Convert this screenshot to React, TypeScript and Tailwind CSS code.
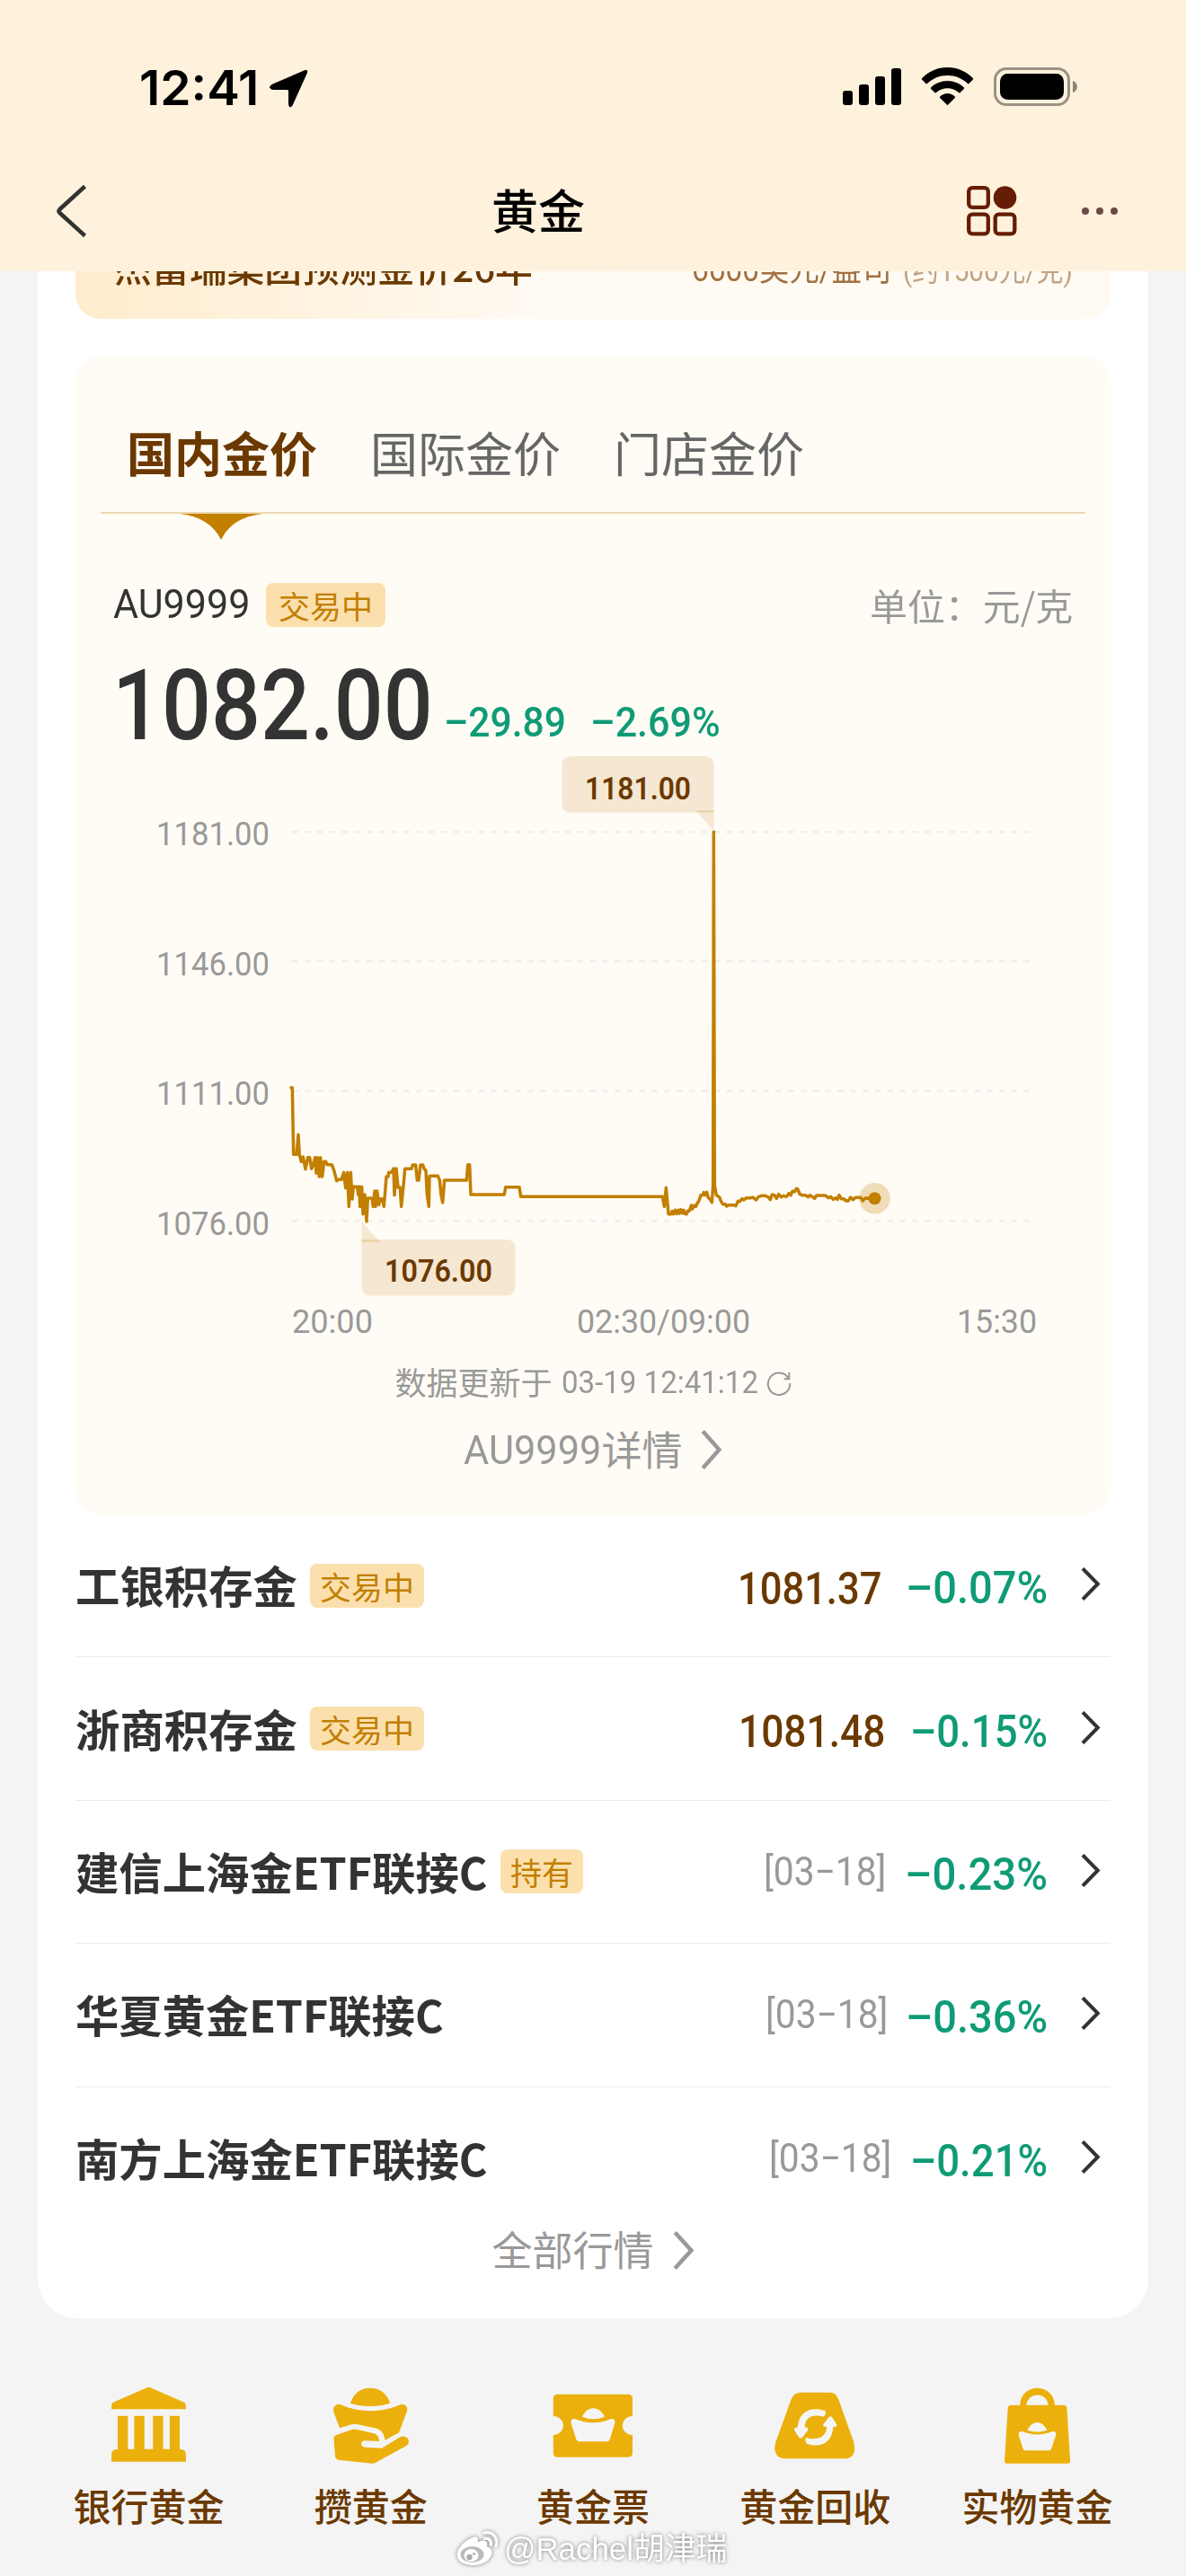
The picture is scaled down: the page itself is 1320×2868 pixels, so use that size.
import { useLayoutEffect, useRef, useState, type ReactNode } from "react";

/* Text squeezed or stretched horizontally to an exact width. */
function Fit({ w, className = "", children }: { w: number; className?: string; children: ReactNode }) {
  const ref = useRef<HTMLSpanElement>(null);
  const [scale, setScale] = useState(1);
  useLayoutEffect(() => {
    if (ref.current) setScale(w / ref.current.offsetWidth);
  }, [w]);
  return (
    <span className={`inline-block shrink-0 whitespace-nowrap ${className}`} style={{ width: w }}>
      <span ref={ref} className="inline-block origin-left" style={{ transform: `scaleX(${scale})` }}>
        {children}
      </span>
    </span>
  );
}

function Chevron({ w, h, sw, className }: { w: number; h: number; sw: number; className: string }) {
  return (
    <svg width={w} height={h} viewBox={`0 0 ${w} ${h}`} fill="none" stroke="currentColor" strokeWidth={sw} className={className}>
      <path d={`M${sw / 2} ${sw / 3} L${w - sw * 0.8} ${h / 2} L${sw / 2} ${h - sw / 3}`} />
    </svg>
  );
}

function StatusBar() {
  return (
    <div className="flex h-[168px] items-start pl-[155px] pr-[120px] pt-[75px]">
      <Fit w={133} className="-mt-[4px] font-['Inter'] text-[53px] font-semibold leading-[54px] text-black">12:41</Fit>
      <svg width="44" height="44" viewBox="0 0 44 44" className="ml-[11px] mt-[2px]">
        <path d="M40.500 1.500Q43.500 .5 42.500 4L26 40.500Q23.500 44 22.500 39.500V24.500Q22.500 22.500 20.500 22.500H4.500Q-1 21 3.500 17.500Z" fill="#000" stroke="#000" strokeWidth="1" />
      </svg>
      <div className="flex-1" />
      <svg width="262" height="44" viewBox="937 75 262 44">
        <g>
          <rect x="937" y="101" width="11" height="16" rx="3" />
          <rect x="955" y="94" width="11" height="23" rx="3" />
          <rect x="973" y="85" width="11" height="32" rx="3" />
          <rect x="991" y="76" width="11" height="41" rx="3" />
        </g>
        <path d="M1053.500 75C1042.500 75 1032.500 79.500 1025 87.300Q1024.600 88 1025 88.500L1029.500 93Q1030.200 93.500 1031 92.900C1037 87.200 1045 83.900 1053.500 83.900S1070 87.200 1076 92.900Q1076.800 93.500 1077.500 93L1082 88.500Q1082.400 88 1082 87.300C1074.500 79.500 1064.500 75 1053.500 75Z" />
        <path d="M1053.500 90C1046.500 90 1040 92.800 1035 97.500Q1034.600 98.200 1035 98.700L1039.500 103.200Q1040.200 103.700 1041 103.100C1044.500 100 1048.800 98.200 1053.500 98.200S1062.500 100 1066 103.100Q1066.800 103.700 1067.500 103.200L1072 98.700Q1072.400 98.200 1072 97.500C1067 92.800 1060.500 90 1053.500 90Z" />
        <path d="M1053.500 104C1050.500 104 1047.500 105.300 1045.200 107.500Q1044.600 108.200 1045.200 108.900L1052.700 116.500Q1053.500 117.300 1054.300 116.500L1061.800 108.900Q1062.400 108.200 1061.800 107.500C1059.500 105.300 1056.500 104 1053.500 104Z" />
        <rect x="1106.500" y="76.500" width="82" height="40" rx="12.500" fill="none" stroke="#9a9284" strokeWidth="3" />
        <rect x="1112" y="82" width="71" height="29" rx="8.500" />
        <path d="M1193 90C1199.500 92 1199.500 101 1193 103Z" fill="#8a8376" />
      </svg>
    </div>
  );
}

function NavBar() {
  return (
    <div className="flex h-[134px] items-center pl-[62px] pr-[76px]">
      <svg width="36" height="60" viewBox="0 0 36 60" fill="none" stroke="#333" strokeWidth="4.500">
        <path d="M32.500 2.500L4.500 28Q2.500 30 4.500 32L32.500 57.500" />
      </svg>
      <span className="-mt-[5px] ml-[449px] text-[52px] font-medium leading-[52px] text-black">黄金</span>
      <div className="flex-1" />
      <svg width="56" height="56" viewBox="0 0 56 56" fill="none" stroke="#661d05" strokeWidth="4.300">
        <rect x="2.200" y="2.200" width="21.600" height="21.600" rx="4" />
        <rect x="2.200" y="31.700" width="21.600" height="21.600" rx="4" />
        <rect x="31.700" y="31.700" width="21.600" height="21.600" rx="4" />
        <circle cx="42.500" cy="13" r="12.800" fill="#661d05" stroke="none" />
      </svg>
      <div className="ml-[72px] flex gap-2">
        <i className="size-2 rounded-full bg-[#6b4a42]" />
        <i className="size-2 rounded-full bg-[#6b4a42]" />
        <i className="size-2 rounded-full bg-[#6b4a42]" />
      </div>
    </div>
  );
}

function Badge({ w, children }: { w: number; children: ReactNode }) {
  return (
    <span
      className="flex h-[49px] shrink-0 items-center justify-center rounded-[8px] bg-[#fbe0ae] text-[35px] leading-[49px] text-[#c27f00]"
      style={{ width: w }}
    >
      {children}
    </span>
  );
}

const NIGHT =
  "M24,33 L28,33 L32,256 L42,256 L48,190 L52,258 L58,280 L64,264 L72,305 L80,266 L86,266 L92,304 L98,290 L104,266 L108,318 L112,266 L118,330 L122,266 L128,330 L134,280 L140,280 L145,290 L160,290 L168,312 L176,344 L180,340 L192,340 L200,316 L206,368 L212,316 L217,430 L223,316 L228,405 L232,364 L245,364 L248,390 L252,364 L254,430 L260,364 L264,455 L270,390 L276,480 L280,402 L294,402 L298,430 L303,378 L306,430 L311,378 L317,424 L322,404 L328,404 L334,430 L342,330 L348,330 L350,316 L360,316 L366,303 L369,392 L375,303 L381,366 L388,366 L392,430 L400,350 L404,304 L426,304 L430,291 L440,291 L445,342 L450,342 L456,291 L464,291 L468,303 L474,310 L478,390 L484,430 L486,328 L514,328 L520,342 L525,392 L530,417 L536,342 L610,342 L614,290 L620,290 L624,390 L736,390 L740,365 L786,365 L791,397";
const DAY =
  "M-451,97 L22,97 L28,130 L34,67 L38,110 L42,155 L50,155 L54,146 L58,155 L64,142 L69,154 L74,142 L78,153 L83,140 L88,152 L93,142 L97,154 L102,155 L107,144 L112,144 L118,126 L122,138 L128,126 L133,130 L138,120 L144,110 L150,92 L156,92 L160,83 L166,92 L170,82 L175,100 L182,107 L187,116 L191,60 L193,-1122 L196,60 L202,92 L212,98 L218,114 L224,122 L232,122 L236,129 L242,125 L262,125 L267,128 L274,112 L280,113 L288,104 L294,108 L302,101 L318,101 L324,99 L334,108 L342,98 L352,94 L366,94 L376,99 L382,107 L388,90 L396,92 L403,103 L410,89 L418,98 L426,94 L436,97 L444,86 L450,92 L456,79 L464,80 L469,70 L474,72 L480,88 L488,92 L500,92 L508,98 L514,92 L524,98 L530,103 L536,93 L566,93 L576,101 L584,97 L592,106 L600,101 L606,106 L612,92 L619,104 L628,104 L634,111 L642,111 L650,99 L658,107 L666,100 L684,100 L691,111 L698,102 L730,103";

function AxisText({ x, y, w, children }: { x: number; y: number; w: number; children: string }) {
  return (
    <text x={x} y={y} textLength={w} lengthAdjust="spacingAndGlyphs" fill="#999" fontSize="36.500">
      {children}
    </text>
  );
}

function PriceChart() {
  return (
    <svg width="1152" height="655" viewBox="84 838 1152 655" className="block font-['Roboto']">
      <g stroke="#f0eeee" strokeWidth="2.500" strokeDasharray="7 6.800">
        <path d="M325 926.300H1148M325 1070.300H1148M325 1214.700H1148M325 1359.300H1148" />
      </g>
      <AxisText x={174} y={940.5} w={126}>1181.00</AxisText>
      <AxisText x={174} y={1086} w={126}>1146.00</AxisText>
      <AxisText x={174} y={1230} w={126}>1111.00</AxisText>
      <AxisText x={174} y={1374.5} w={126}>1076.00</AxisText>
      <AxisText x={325} y={1483.5} w={90}>20:00</AxisText>
      <AxisText x={642} y={1483.5} w={193}>02:30/09:00</AxisText>
      <AxisText x={1065} y={1483.5} w={89}>15:30</AxisText>
      <g fill="none" stroke="#c27f00" strokeWidth="10.500" strokeLinejoin="round" strokeLinecap="round">
        <path transform="translate(316 1200) scale(.33333)" d={NIGHT} />
        <path transform="translate(730 1300) scale(.33333)" d={DAY} />
      </g>
      <circle cx="973.500" cy="1334.300" r="17.300" fill="#c27f00" fillOpacity=".25" />
      <circle cx="973.500" cy="1334.300" r="7" fill="#c27f00" />
      <path d="M636 842H784Q794.500 842 794.500 852V904.500H636Q625.500 904.500 625.500 894.500V852Q625.500 842 636 842Z" fill="#f5e7d2" />
      <path d="M774 902H794.500V925Z" fill="#f5e7d2" />
      <path d="M774 902H794.500V904.500H775.500Z" fill="#ecd5a9" />
      <path d="M402.500 1380H563.500Q573.500 1380 573.500 1390V1432.500Q573.500 1442.500 563.500 1442.500H412.500Q402.500 1442.500 402.500 1432.500Z" fill="#f5e7d2" />
      <path d="M402.500 1360L423 1383H402.500Z" fill="#f5e7d2" />
      <path d="M402.500 1380H420.500L423 1383H402.500Z" fill="#ecd5a9" />
      <g fill="#6b3900" fontSize="35" fontWeight="600">
        <text x="651" y="889.500" textLength="118" lengthAdjust="spacingAndGlyphs">1181.00</text>
        <text x="428" y="1427" textLength="120" lengthAdjust="spacingAndGlyphs">1076.00</text>
      </g>
    </svg>
  );
}

function PriceCard() {
  return (
    <section className="mt-[42px] h-[1289px] rounded-[28px] bg-[#fffcf5]">
      <div className="mx-[28px] flex h-[175px] gap-[59px] border-b-2 border-[#ecd9b0] pl-[29px] pt-[80px] text-[53px] leading-[53px] text-[#666]">
        <span className="font-bold text-[#6b3900]">国内金价</span>
        <span>国际金价</span>
        <span>门店金价</span>
      </div>
      <svg width="92" height="29" viewBox="0 0 92 29" className="ml-[116px] block">
        <path d="M0 0H92Q58 4 46 29Q34 4 0 0Z" fill="#c27f00" />
      </svg>
      <div className="flex h-[101px] items-center pl-[42px] pr-[42px] pt-[44px]">
        <Fit w={152} className="-mt-[3px] font-['Roboto'] text-[45px] leading-[49px] text-[#333]">AU9999</Fit>
        <div className="ml-[18px]"><Badge w={133}>交易中</Badge></div>
        <div className="flex-1" />
        <Fit w={226} className="text-[41px] leading-[49px] text-[#999]">单位：元/克</Fit>
      </div>
      <div className="flex h-[136px] items-end pl-[41px] font-['Roboto'] font-medium">
        <Fit w={357} className="-mb-[12px] text-[110px] leading-[128px] text-[#333]">1082.00</Fit>
        <Fit w={136} className="mb-[7px] ml-[12px] text-[46px] leading-[54px] text-[#0f9b76]">–29.89</Fit>
        <Fit w={145} className="mb-[7px] ml-[27px] text-[46px] leading-[54px] text-[#0f9b76]">–2.69%</Fit>
      </div>
      <PriceChart />
      <div className="flex h-[93px] items-center justify-center text-[#999]">
        <span className="-mt-[4px] text-[35px] leading-[40px]">数据更新于</span>
        <Fit w={219} className="ml-[10px] font-['Roboto'] text-[35px] leading-[40px]">03-19 12:41:12</Fit>
        <svg width="28" height="28" viewBox="0 0 28 28" fill="none" stroke="currentColor" strokeWidth="2" className="ml-[9px]">
          <path d="M24.500 8.500A12.200 12.200 0 1 0 26.200 14M25.300 2V9.300H19.500" />
        </svg>
      </div>
      <div className="flex h-[58px] items-center justify-center text-[#999]">
        <Fit w={153} className="font-['Roboto'] text-[45px] leading-[50px]">AU9999</Fit>
        <span className="-mt-[4px] text-[45px] leading-[50px]">详情</span>
        <Chevron w={24} h={44} sw={4.5} className="-mt-[2px] ml-[20px]" />
      </div>
    </section>
  );
}

type Row = { name: string; nameW: number; badge?: string; badgeW?: number; price?: string; priceW: number; date?: string; pct: string; pctW: number; gap: number };
const ROWS: Row[] = [
  { name: "工银积存金", nameW: 247, badge: "交易中", badgeW: 127, price: "1081.37", priceW: 160, pct: "–0.07%", pctW: 158, gap: 27 },
  { name: "浙商积存金", nameW: 247, badge: "交易中", badgeW: 127, price: "1081.48", priceW: 163, pct: "–0.15%", pctW: 153, gap: 28 },
  { name: "建信上海金ETF联接C", nameW: 459, badge: "持有", badgeW: 92, date: "[03−18]", priceW: 136, pct: "–0.23%", pctW: 159, gap: 21 },
  { name: "华夏黄金ETF联接C", nameW: 410, date: "[03−18]", priceW: 136, pct: "–0.36%", pctW: 158, gap: 20 },
  { name: "南方上海金ETF联接C", nameW: 459, date: "[03−18]", priceW: 136, pct: "–0.21%", pctW: 153, gap: 21 },
];

function FundRow({ r, last }: { r: Row; last: boolean }) {
  return (
    <div className={`flex h-[159.400px] items-center pr-[11px] ${last ? "" : "border-b border-[#eaeaea]"}`}>
      <Fit w={r.nameW} className="-mt-[2px] text-[49px] font-bold leading-[60px] text-[#333]">{r.name}</Fit>
      {r.badge && <div className="ml-[14px]"><Badge w={r.badgeW!}>{r.badge}</Badge></div>}
      <div className="flex-1" />
      <div className="flex items-center font-['Roboto']">
        {r.price && <Fit w={r.priceW} className="mt-[7px] text-[50px] font-medium leading-[58px] text-[#6b3900]">{r.price}</Fit>}
        {r.date && <Fit w={r.priceW} className="text-[44px] leading-[58px] text-[#999]">{r.date}</Fit>}
        <div style={{ width: r.gap }} />
        <Fit w={r.pctW} className="mt-[6px] text-[50px] font-medium leading-[58px] text-[#0f9b76]">{r.pct}</Fit>
      </div>
      <Chevron w={22} h={37} sw={4} className="-mt-[3px] ml-[37px] text-[#333]" />
    </div>
  );
}

const GOLD = "#ecb00c";

function Icon({ x, y, w, h, children }: { x: number; y: number; w: number; h: number; children: ReactNode }) {
  return (
    <svg width={w / 2.45} height={h / 3} viewBox={`${x} ${y} ${w} ${h}`} preserveAspectRatio="none" fill={GOLD}>
      {children}
    </svg>
  );
}

const NAV: { label: string; icon: ReactNode }[] = [
  {
    label: "银行黄金",
    icon: (
      <Icon x={152} y={112} w={213} h={260}>
        <path d="M157 188V178Q157 168 164 164L254 116Q258 113 263 116L353 164Q360 168 360 178V188Z" />
        <path d="M174 210H202V321H219V210H247V321H270V210H298V321H316V210H343V321Q360 321 360 340V363H157V340Q157 321 174 321Z" />
      </Icon>
    ),
  },
  {
    label: "攒黄金",
    icon: (
      <Icon x={757} y={112} w={215} h={260}>
        <path d="M808 168C818 134 836 117 862 117S908 134 917 168C880 181 844 181 808 168Z" />
        <path d="M779 251L763 198C759 178 773 165 786 175C838 200 890 200 940 175C953 165 967 178 963 194L941 266L903 291C900 268 893 257 880 252L826 238Q819 236 812 239Z" />
        <path d="M763 284Q763 278 769 275L812 256Q819 253 827 256L873 269Q886 274 887 295L848 293Q838 294 838 305Q839 313 848 315L893 318L898 315L942 282Q951 276 960 281Q971 290 966 304L960 311L876 367Q873 369 868 369L775 357Q768 355 767 347Z" />
      </Icon>
    ),
  },
  {
    label: "黄金票",
    icon: (
      <Icon x={37} y={112} w={221} h={260}>
        <path d="M52 138H242Q255 138 255 152V211C219 213 219 272 255 274V334Q255 348 242 348H52Q39 348 39 334V274C75 272 75 213 39 211V152Q39 138 52 138Z" />
        <g fill="#f5f5f5">
          <path d="M118 213C126 194 136 185 148 185S170 194 179 213C159 223 138 223 118 213Z" />
          <path d="M97 220C130 237 165 237 197 220Q207 218 207 232L193 289Q191 296 186 296H110Q104 296 102 290L88 237Q84 219 97 220Z" />
        </g>
      </Icon>
    ),
  },
  {
    label: "黄金回收",
    icon: (
      <Icon x={640} y={112} w={224} h={260}>
        <path d="M712 132H794Q811 133 817 155L858 296Q869 344 840 353H668Q636 348 645 300L688 155Q694 134 712 132Z" />
        <g fill="#f5f5f5">
          <path d="M698 251L706 247C708 208 728 182 767 189L781 193Q785 202 777 213C744 203 727 216 725 247L733 251Q735 256 733 259L718 283Q714 286 710 283L697 259Q695 255 698 251Z" />
          <path d="M728 283L738 286C764 290 784 278 785 248L776 245Q774 241 776 237L791 214Q795 209 799 214L812 239Q813 244 810 246L802 248C801 289 781 314 743 308L731 303Q724 296 728 283Z" />
        </g>
      </Icon>
    ),
  },
  {
    label: "实物黄金",
    icon: (
      <Icon x={1263} y={112} w={188} h={260}>
        <path d="M1310 174C1312 98 1402 98 1405 174H1429Q1437 174 1438 183L1447 360Q1447 369 1440 369H1275Q1268 369 1268 360L1277 183Q1278 174 1286 174ZM1328 174H1387C1384 129 1331 129 1328 174Z" fillRule="evenodd" />
        <g fill="#f5f5f5">
          <path d="M1330 258C1338 240 1347 232 1357 232S1376 240 1384 258C1366 265 1348 265 1330 258Z" />
          <path d="M1316 262C1343 276 1372 276 1399 262Q1410 261 1408 274L1396 319Q1394 326 1390 326H1325Q1320 326 1318 319L1307 276Q1304 261 1316 262Z" />
        </g>
      </Icon>
    ),
  },
];

export default function App() {
  return (
    <div className="relative flex h-[2868px] w-[1320px] flex-col overflow-hidden bg-[#f4f4f4] font-['Noto_Sans_CJK_SC',sans-serif]">
      <header className="h-[302px] bg-[#fff2dd]">
        <StatusBar />
        <NavBar />
      </header>
      <main className="mx-[42px] h-[2279px] overflow-hidden rounded-b-[44px] bg-white px-[42px]">
        <div className="flex h-[53px] items-start justify-between overflow-hidden rounded-b-[28px] bg-linear-to-r from-[#ffeccd] via-[#fffaf3] via-45% to-[#fffaf2] pl-[43px] pr-[42px]">
          <Fit w={466} className="-mt-[37px] text-[42px] font-medium leading-[62px] text-[#6b3900]">杰富瑞集团预测金价26年</Fit>
          <div className="-mt-[32px] flex items-baseline gap-[13px] font-['Roboto','Noto_Sans_CJK_SC',sans-serif] leading-[62px]">
            <Fit w={222} className="text-[37px] text-[#a17041]">6600美元/盎司</Fit>
            <Fit w={189} className="text-[34px] text-[#c0a384]">(约1500元/克)</Fit>
          </div>
        </div>
        <PriceCard />
        <div className="flex flex-col">
          {ROWS.map((r, i) => (
            <FundRow key={r.name} r={r} last={i === ROWS.length - 1} />
          ))}
        </div>
        <div className="flex h-[46px] items-center justify-center text-[#999]">
          <span className="-mt-[4px] text-[45px] leading-[48px]">全部行情</span>
          <Chevron w={24} h={43} sw={4.5} className="ml-[21px]" />
        </div>
      </main>
      <nav className="grid grid-cols-5 px-[42px] pt-[76px]">
        {NAV.map((n) => (
          <div key={n.label} className="flex flex-col items-center">
            {n.icon}
            <span className="mt-[20px] text-[42px] font-medium leading-[50px] text-[#6b3900]">{n.label}</span>
          </div>
        ))}
      </nav>
      <div className="absolute bottom-[8px] left-[507px] flex items-center text-white [filter:drop-shadow(0_0_2px_#777)]">
        <svg width="48" height="42" viewBox="0 0 48 42" fill="#fff">
          <path d="M19 8C24 6 26 9 24.500 13C31 10 37 11 35 18C41 20 42 25 39 30C34 38 22 41 12 38C2 35-1 28 4 20C8 14 13 10 19 8Z" />
          <ellipse cx="18.500" cy="27" rx="13" ry="9" fill="#bbb" />
          <ellipse cx="17.500" cy="28" rx="8" ry="7" fill="#fff" />
          <circle cx="15.500" cy="30" r="3.200" fill="#aaa" />
          <circle cx="20.500" cy="26.500" r="1.400" fill="#aaa" />
          <path d="M32 3C41 1 48 8 45 18M32.500 9.500C37 8.500 40.500 12 39 16.500" fill="none" stroke="#fff" strokeWidth="3" strokeLinecap="round" />
        </svg>
        <Fit w={248} className="ml-[6px] font-['Liberation_Sans','Noto_Sans_CJK_SC',sans-serif] text-[35px] leading-[44px]">@Rachel胡津瑞</Fit>
      </div>
    </div>
  );
}
